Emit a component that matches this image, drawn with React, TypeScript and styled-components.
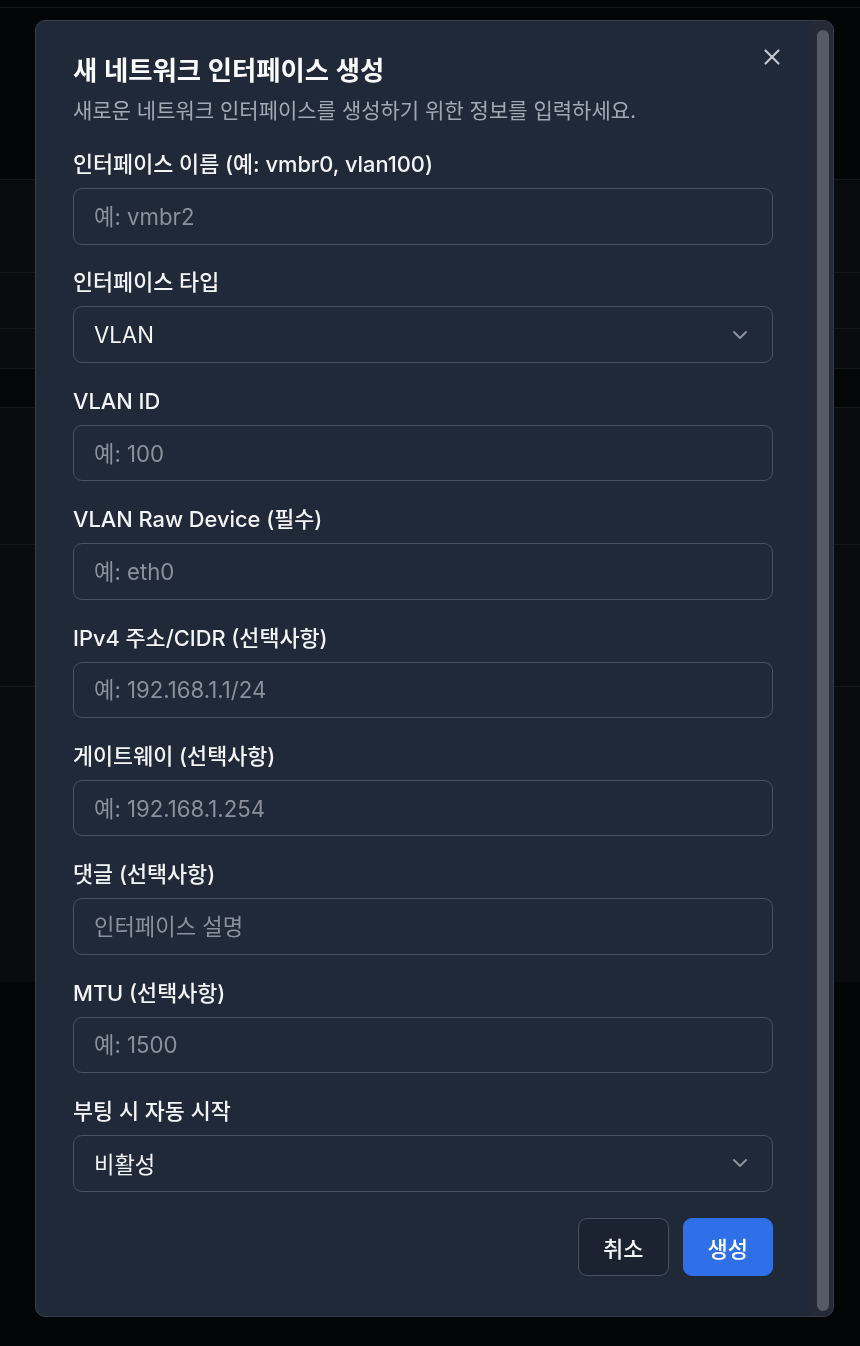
import React from "react";
import styled, { createGlobalStyle } from "styled-components";
import { ChevronDown, X } from "lucide-react";

const GlobalStyle = createGlobalStyle`
  html, body {
    margin: 0;
    padding: 0;
    background: #040507;
    font-family: Inter, "Noto Sans CJK KR", sans-serif;
  }
  * {
    box-sizing: border-box;
  }
`;

// ---------------- background page (dimmed behind the dialog)

const Page = styled.div`
  width: 860px;
  height: 1346px;
  background: #040507;
  display: flex;
  flex-direction: column;
`;

const TopBar = styled.div`
  height: 8px;
  border-bottom: 1px solid #15171c;
  background: #040507;
  margin-bottom: 171px;
`;

const Table = styled.div`
  display: flex;
  flex-direction: column;
  background: #0a0b0e;
`;

const TableRow = styled.div<{ $h: number; $dark?: boolean }>`
  height: ${(p) => p.$h}px;
  border-top: 1px solid #15171c;
  background: ${(p) => (p.$dark ? "#050608" : "transparent")};
`;

// ---------------- dialog

const Overlay = styled.div`
  position: fixed;
  inset: 0;
`;

const Dialog = styled.div`
  position: absolute;
  left: 35px;
  top: 20px;
  width: 799px;
  height: 1297px;
  background: #1f2937;
  border: 1px solid #363e4c;
  border-radius: 10px;
  overflow: hidden;
  color: #f3f4f6;
  display: flex;
`;

const Content = styled.div`
  flex: 1;
  min-width: 0;
  padding: 32px 39px 0 37px;
  display: flex;
  flex-direction: column;
`;

const ScrollTrack = styled.div`
  width: 21px;
  flex-shrink: 0;
  background: #252b36;
  padding: 9px 4px 5px 5px;
  display: flex;
`;

const ScrollThumb = styled.div`
  flex: 1;
  background: #555b64;
  border-radius: 6px;
`;

const CloseButton = styled.button`
  position: absolute;
  top: 23px;
  right: 48px;
  width: 26px;
  height: 26px;
  padding: 0;
  border: none;
  background: transparent;
  color: #c4c8ce;
  display: flex;
  align-items: center;
  justify-content: center;
  cursor: pointer;
`;

const Header = styled.div`
  display: flex;
  flex-direction: column;
  gap: 10px;
  margin-bottom: 25px;
`;

const Title = styled.h2`
  margin: 0;
  font-size: 26.4px;
  line-height: 34px;
  font-weight: 600;
  color: #f9fafb;
`;

const Description = styled.p`
  margin: 0;
  font-size: 21px;
  line-height: 28px;
  color: #a3a9b3;
`;

const Form = styled.form`
  display: flex;
  flex-direction: column;
  gap: 23.9px;
`;

const Field = styled.div`
  display: flex;
  flex-direction: column;
  gap: 10px;
`;

const Label = styled.label`
  font-size: 21.8px;
  line-height: 28px;
  font-weight: 500;
  color: #f3f4f6;
  white-space: nowrap;
`;

const Input = styled.input`
  height: 56.5px;
  width: 100%;
  padding: 0 20px;
  border: 1px solid #4a5261;
  border-radius: 9px;
  background: #1f2937;
  color: #f3f4f6;
  font-family: inherit;
  font-size: 22.2px;
  outline: none;

  &::placeholder {
    color: #8b919b;
  }
`;

const SelectBox = styled.button`
  height: 56.5px;
  width: 100%;
  padding: 0 20px;
  border: 1px solid #4a5261;
  border-radius: 9px;
  background: #1f2937;
  color: #f3f4f6;
  font-family: inherit;
  font-size: 22.2px;
  display: flex;
  align-items: center;
  justify-content: space-between;
  text-align: left;

  svg {
    color: #8d929a;
  }
`;

const Footer = styled.div`
  display: flex;
  justify-content: flex-end;
  gap: 14px;
  margin-top: 2.6px;
`;

const Button = styled.button<{ $primary?: boolean }>`
  height: 58px;
  padding: 0 24px;
  border-radius: 9px;
  border: 1px solid ${(p) => (p.$primary ? "#2f70e9" : "#4a5261")};
  background: ${(p) => (p.$primary ? "#2f70e9" : "#1c2330")};
  color: ${(p) => (p.$primary ? "#ffffff" : "#f3f4f6")};
  font-family: inherit;
  font-size: 22px;
  font-weight: 500;
  cursor: pointer;
`;

type FieldDef = {
  label: string;
  placeholder?: string;
  value?: string;
};

const fields: FieldDef[] = [
  { label: "인터페이스 이름 (예: vmbr0, vlan100)", placeholder: "예: vmbr2" },
  { label: "인터페이스 타입", value: "VLAN" },
  { label: "VLAN ID", placeholder: "예: 100" },
  { label: "VLAN Raw Device (필수)", placeholder: "예: eth0" },
  { label: "IPv4 주소/CIDR (선택사항)", placeholder: "예: 192.168.1.1/24" },
  { label: "게이트웨이 (선택사항)", placeholder: "예: 192.168.1.254" },
  { label: "댓글 (선택사항)", placeholder: "인터페이스 설명" },
  { label: "MTU (선택사항)", placeholder: "예: 1500" },
  { label: "부팅 시 자동 시작", value: "비활성" },
];

function App() {
  return (
    <>
      <GlobalStyle />
      <Page>
        <TopBar />
        <Table>
          <TableRow $h={93} />
          <TableRow $h={56} />
          <TableRow $h={40} />
          <TableRow $h={39} $dark />
          <TableRow $h={137} />
          <TableRow $h={142} />
          <TableRow $h={296} />
        </Table>
      </Page>
      <Overlay>
        <Dialog role="dialog">
          <CloseButton aria-label="닫기">
            <X size={26} strokeWidth={2} />
          </CloseButton>
          <Content>
            <Header>
              <Title>새 네트워크 인터페이스 생성</Title>
              <Description>
                새로운 네트워크 인터페이스를 생성하기 위한 정보를 입력하세요.
              </Description>
            </Header>
            <Form onSubmit={(e) => e.preventDefault()}>
              {fields.map((f) => (
                <Field key={f.label}>
                  <Label>{f.label}</Label>
                  {f.value ? (
                    <SelectBox type="button">
                      <span>{f.value}</span>
                      <ChevronDown size={24} strokeWidth={2} />
                    </SelectBox>
                  ) : (
                    <Input placeholder={f.placeholder} />
                  )}
                </Field>
              ))}
              <Footer>
                <Button type="button">취소</Button>
                <Button type="submit" $primary>
                  생성
                </Button>
              </Footer>
            </Form>
          </Content>
          <ScrollTrack>
            <ScrollThumb />
          </ScrollTrack>
        </Dialog>
      </Overlay>
    </>
  );
}

export default App;
